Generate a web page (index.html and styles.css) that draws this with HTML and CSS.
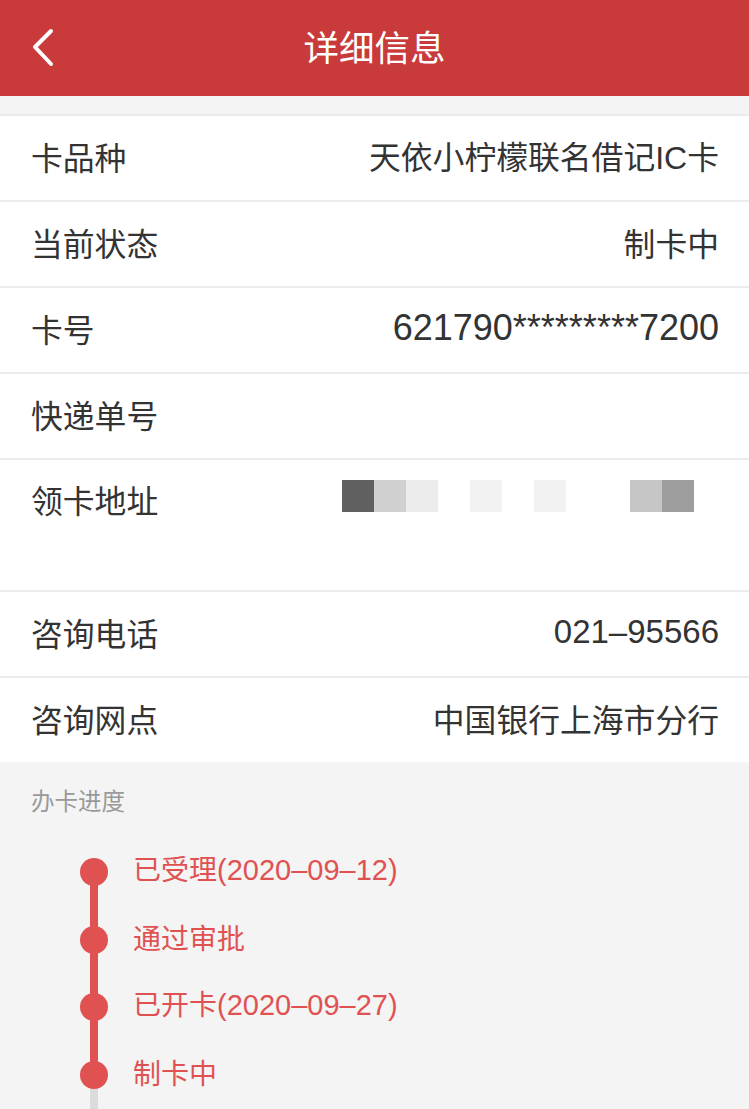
FILE: index.html
```html
<!DOCTYPE html>
<html lang="zh-CN">
<head>
<meta charset="utf-8">
<title>详细信息</title>
<link rel="stylesheet" href="styles.css">
</head>
<body>
<header class="topbar">
  <svg class="back" width="30" height="40" viewBox="0 0 30 40" aria-hidden="true">
    <path d="M22 4 L6 20 L22 37" fill="none" stroke="#fff" stroke-width="4" stroke-linecap="round" stroke-linejoin="round"/>
  </svg>
  <h1 class="title">详细信息</h1>
</header>
<div class="spacer"></div>
<section class="list">
  <div class="row"><span class="label">卡品种</span><span class="value">天依小柠檬联名借记<span class="lat-big">IC</span>卡</span></div>
  <div class="row"><span class="label">当前状态</span><span class="value">制卡中</span></div>
  <div class="row"><span class="label">卡号</span><span class="value num-card">621790*********7200</span></div>
  <div class="row"><span class="label">快递单号</span><span class="value"></span></div>
  <div class="row row-tall">
    <span class="label">领卡地址</span>
    <span class="mosaic">
      <i class="px c1"></i><i class="px c2"></i><i class="px c3"></i><i class="px"></i><i class="px c4"></i><i class="px"></i><i class="px c4"></i><i class="px"></i><i class="px"></i><i class="px c5"></i><i class="px c6"></i>
    </span>
  </div>
  <div class="row"><span class="label">咨询电话</span><span class="value num-phone">021–95566</span></div>
  <div class="row row-last"><span class="label">咨询网点</span><span class="value">中国银行上海市分行</span></div>
</section>
<section class="progress">
  <div class="progress-title">办卡进度</div>
  <ul class="timeline">
    <li class="step"><span class="dot"></span><span class="step-text">已受理<span class="lat">(2020–09–12)</span></span></li>
    <li class="step"><span class="dot"></span><span class="step-text">通过审批</span></li>
    <li class="step"><span class="dot"></span><span class="step-text">已开卡<span class="lat">(2020–09–27)</span></span></li>
    <li class="step step-last"><span class="dot"></span><span class="step-text">制卡中</span></li>
  </ul>
</section>
</body>
</html>
```
FILE: styles.css
```css
* { box-sizing: border-box; }
html, body { margin: 0; padding: 0; }
body {
  background: #ffffff;
  font-family: "Noto Sans CJK SC", sans-serif;
  color: #333333;
  width: 749px;
  overflow: hidden;
}
.topbar {
  height: 96px;
  background: #c93a3b;
  display: flex;
  align-items: center;
  justify-content: center;
  position: relative;
}
.back {
  position: absolute;
  left: 29px;
  top: 27px;
}
.title {
  margin: 0;
  font-weight: normal;
  font-size: 35.5px;
  line-height: 40px;
  color: #ffffff;
  font-family: "Noto Sans CJK SC", sans-serif;
  margin-top: -4px;
}
.spacer {
  height: 18px;
  background: #f4f4f4;
}
.list {
  border-top: 2px solid #ebebeb;
  background: #fff;
}
.row {
  height: 86px;
  border-bottom: 2px solid #ececec;
  display: flex;
  align-items: center;
  justify-content: space-between;
  padding: 0 30px 4px 31px;
  font-size: 31.8px;
}
.row-last { border-bottom: none; height: 84px; }
.label, .value {
  font-family: "Noto Sans CJK SC", sans-serif;
  line-height: 40px;
  white-space: nowrap;
}
.lat-big {
  font-family: "Liberation Sans", sans-serif;
  font-size: 32px;
}
.num-card {
  font-family: "Liberation Sans", "Noto Sans CJK SC", sans-serif;
  font-size: 36px;
}
.num-phone {
  font-family: "Liberation Sans", "Noto Sans CJK SC", sans-serif;
  font-size: 33px;
}
.row-tall {
  height: 132px;
  align-items: flex-start;
}
.row-tall .label { margin-top: 19px; }
.mosaic {
  display: flex;
  margin-top: 20px;
  margin-right: 25px;
}
.px {
  display: block;
  width: 32px;
  height: 32px;
}
.c1 { background: #606060; }
.c2 { background: #d0d0d0; }
.c3 { background: #ececec; }
.c4 { background: #f2f2f2; }
.c5 { background: #c6c6c6; }
.c6 { background: #9e9e9e; }
.progress {
  background: #f4f4f4;
  padding-top: 22px;
  border-bottom: 1px solid #dddddd;
}
.progress-title {
  font-family: "Noto Sans CJK SC", sans-serif;
  font-size: 23.5px;
  line-height: 32px;
  color: #999999;
  padding-left: 31px;
  margin-bottom: 22px;
}
.timeline {
  list-style: none;
  margin: 0;
  padding: 0;
}
.step {
  position: relative;
  height: 67.7px;
  display: flex;
  align-items: center;
  padding-left: 80px;
}
.step::before {
  content: "";
  position: absolute;
  left: 90px;
  top: 50%;
  width: 8px;
  height: 100%;
  background: #e05252;
}
.step-last::before {
  background: #dcdcdc;
  height: 50%;
}
.dot {
  position: relative;
  width: 28px;
  height: 28px;
  border-radius: 50%;
  background: #e05252;
  flex: none;
}
.step-text {
  margin-left: 25px;
  margin-bottom: 6px;
  font-size: 28px;
  line-height: 36px;
  color: #e05252;
  font-family: "Noto Sans CJK SC", sans-serif;
  white-space: nowrap;
}
.lat {
  font-family: "Liberation Sans", sans-serif;
  font-size: 29px;
}
```
